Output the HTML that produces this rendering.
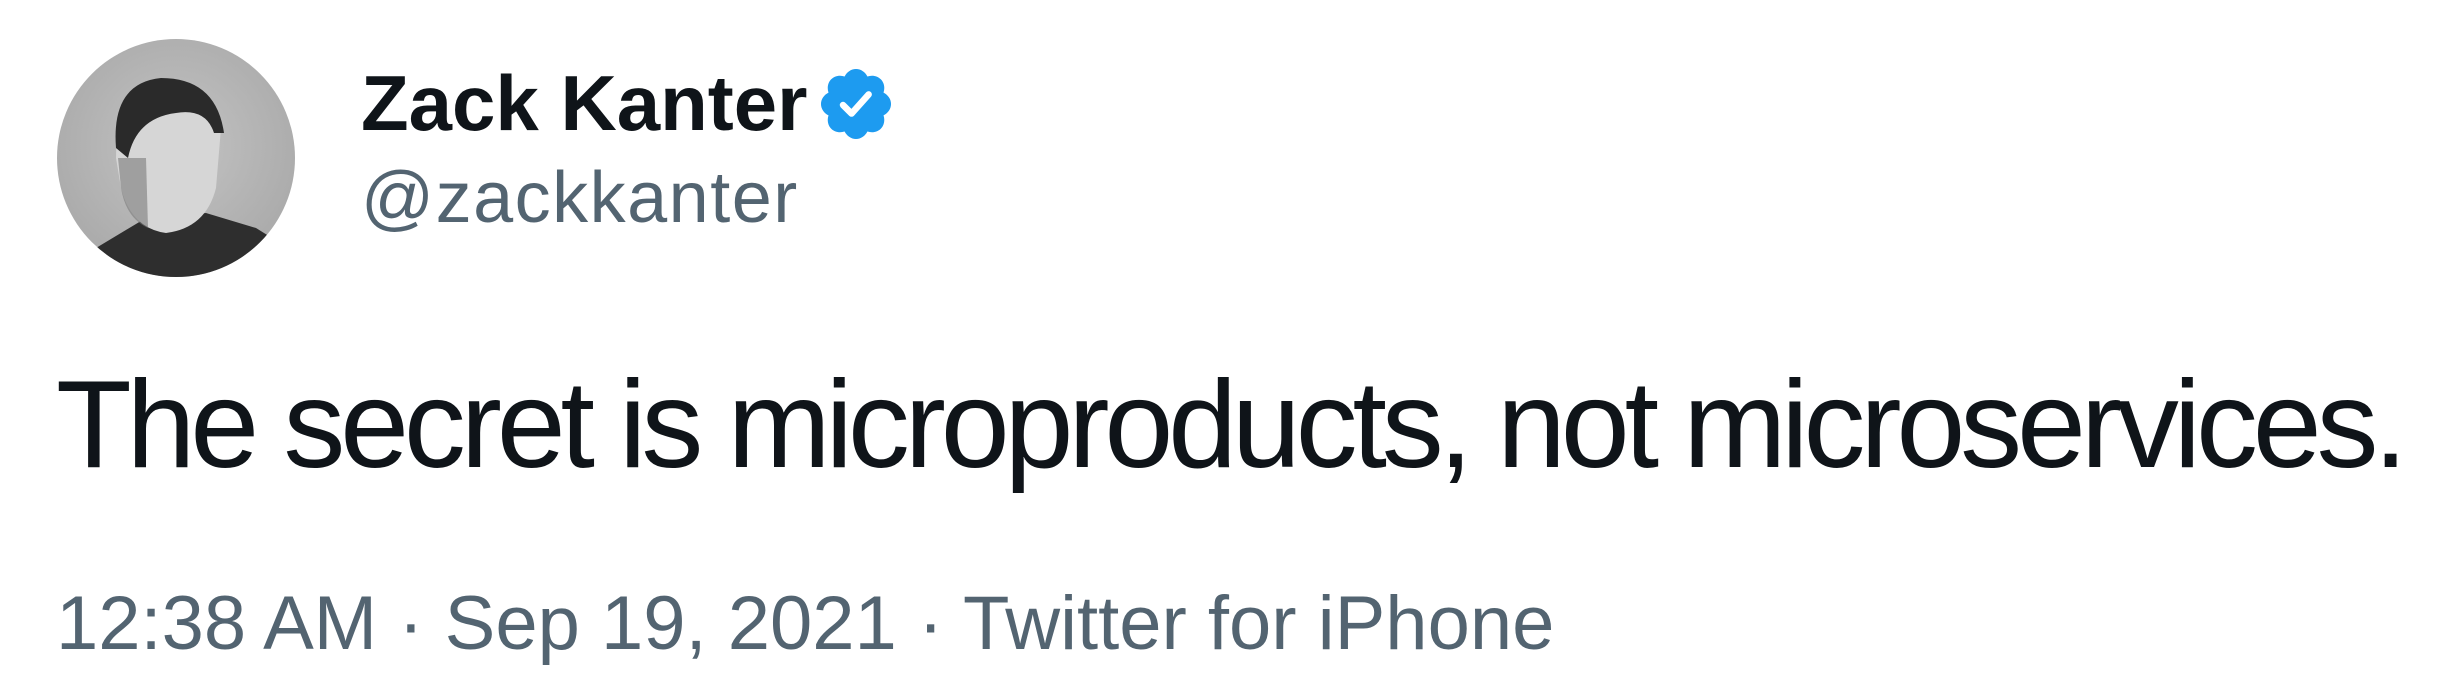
<!DOCTYPE html>
<html><head><meta charset="utf-8"><style>
html,body{margin:0;padding:0;background:#fff;width:2459px;height:700px;overflow:hidden;position:relative;font-family:"Liberation Sans",Arial,sans-serif}
.t{position:absolute;white-space:nowrap;line-height:1}
</style></head><body>
<svg style="position:absolute;left:56px;top:38px" width="240" height="240" viewBox="0 0 240 240">
<defs><clipPath id="c"><circle cx="120" cy="120" r="119"/></clipPath>
<radialGradient id="g" cx="0.5" cy="0.45" r="0.6"><stop offset="0" stop-color="#c4c4c4"/><stop offset="1" stop-color="#a8a8a8"/></radialGradient></defs>
<g clip-path="url(#c)">
<rect width="240" height="240" fill="url(#g)"/>
<path d="M20 240 L40 210 L90 180 L150 175 L200 190 L240 215 L240 240Z" fill="#2e2e2e"/>
<path d="M60 120 Q60 60 100 50 Q150 45 165 90 L160 150 Q150 190 110 195 Q75 190 65 150Z" fill="#d6d6d6"/>
<path d="M60 110 Q55 45 105 40 Q160 40 168 95 L158 95 Q150 70 120 75 Q80 80 72 120Z" fill="#2a2a2a"/>
<path d="M62 120 L90 120 L92 190 Q70 180 65 150Z" fill="#7a7a7a" opacity="0.6"/>
</g></svg>
<div class="t" style="left:361px;top:64px;font-size:78px;font-weight:bold;color:#0f1419">Zack Kanter</div>
<svg style="position:absolute;left:815px;top:63px" width="82" height="82" viewBox="0 0 24 24"><path fill="#1d9bf0" d="M22.25 12c0-1.43-.88-2.670-2.19-3.34.46-1.39.2-2.9-.81-3.91s-2.52-1.27-3.91-.81c-.66-1.31-1.91-2.19-3.34-2.19s-2.67.88-3.33 2.19c-1.4-.46-2.91-.2-3.92.81s-1.26 2.52-.8 3.91c-1.31.67-2.2 1.91-2.2 3.34s.89 2.67 2.2 3.34c-.46 1.39-.21 2.9.8 3.91s2.52 1.26 3.91.81c.67 1.31 1.91 2.19 3.34 2.19s2.68-.88 3.34-2.19c1.39.45 2.9.2 3.91-.81s1.27-2.52.81-3.91c1.31-.67 2.19-1.91 2.19-3.34z"/><path fill="none" stroke="#fff" stroke-width="1.9" stroke-linecap="round" stroke-linejoin="round" d="M8.2 12.3l2.5 2.5 5-5.6"/></svg>
<div class="t" style="left:361px;top:162px;font-size:72px;color:#536471;letter-spacing:1.5px">@zackkanter</div>
<div class="t" style="left:56px;top:363px;font-size:124px;color:#0f1419;letter-spacing:-5.2px">The secret is microproducts, not microservices.</div>
<div class="t" style="left:56px;top:586px;font-size:76px;color:#536471">12:38 AM · Sep 19, 2021 · Twitter for iPhone</div>
</body></html>
